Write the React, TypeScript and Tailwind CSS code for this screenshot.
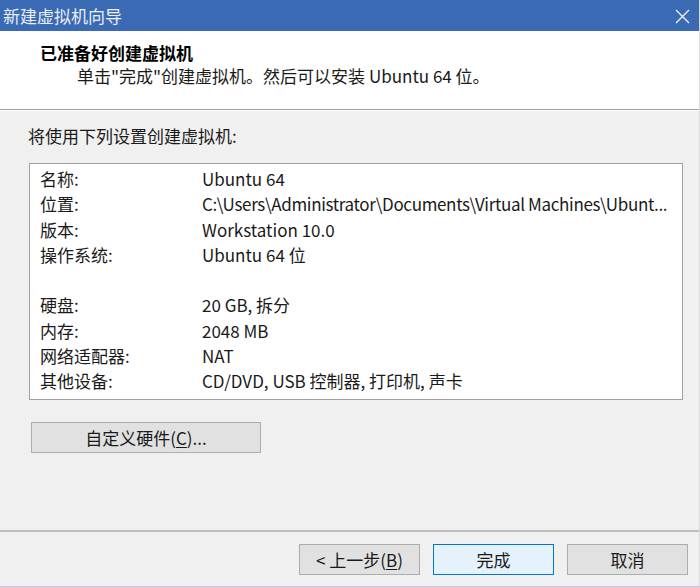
import type { ReactNode } from "react";

const FONT = { fontFamily: '"Noto Sans CJK SC", "Noto Sans", sans-serif' };

type Row = { label: string; value: string; tight?: boolean } | null;

const rows: Row[] = [
  { label: "名称:", value: "Ubuntu 64" },
  { label: "位置:", value: "C:\\Users\\Administrator\\Documents\\Virtual Machines\\Ubunt...", tight: true },
  { label: "版本:", value: "Workstation 10.0" },
  { label: "操作系统:", value: "Ubuntu 64 位" },
  null,
  { label: "硬盘:", value: "20 GB, 拆分" },
  { label: "内存:", value: "2048 MB" },
  { label: "网络适配器:", value: "NAT" },
  { label: "其他设备:", value: "CD/DVD, USB 控制器, 打印机, 声卡" },
];

function DlgButton({ children, primary }: { children: ReactNode; primary?: boolean }) {
  return (
    <button
      className={`w-[121px] h-[31px] flex items-center justify-center text-[17px] text-[#1a1a1a] border ${
        primary ? "bg-[#e5f1fb] border-[#0078d7]" : "bg-[#e1e1e1] border-[#adadad]"
      }`}
    >
      {children}
    </button>
  );
}

export default function App() {
  return (
    <div
      className="w-[700px] h-[587px] flex flex-col bg-[#f0f0f0] border-r border-r-[#dadada] border-b border-b-[#b9cbe0] overflow-hidden"
      style={FONT}
    >
      {/* title bar */}
      <div className="h-[31px] shrink-0 bg-[#3a6ab4] flex items-center justify-between pl-[3px] pr-[9px]">
        <span className="text-[17px] text-[#e9eef7] leading-none">新建虚拟机向导</span>
        <svg width="15" height="15" viewBox="0 0 15 15" className="mt-[1px]">
          <path d="M1 1 L14 14 M14 1 L1 14" stroke="#eef2fa" strokeWidth="1.4" fill="none" />
        </svg>
      </div>

      {/* header */}
      <div className="h-[78px] shrink-0 bg-white pl-[40px] pt-[10px] leading-[23px]">
        <div className="text-[17px] font-bold text-black">已准备好创建虚拟机</div>
        <div className="text-[17px] text-[#1a1a1a] pl-[37px]">单击"完成"创建虚拟机。然后可以安装 Ubuntu 64 位。</div>
      </div>
      <div className="h-px shrink-0 bg-[#a0a0a0]" />
      <div className="h-px shrink-0 bg-white" />

      {/* body */}
      <div className="flex-1 flex flex-col pt-[13px]">
        <div className="pl-[28px] text-[17px] leading-[23px] text-[#1a1a1a]">将使用下列设置创建虚拟机:</div>

        <div className="ml-[29px] mt-[16px] w-[654px] h-[237px] bg-white border border-[#a0a0a0] pt-[2px] pl-[10px] pr-[4px]">
          {rows.map((r, i) =>
            r ? (
              <div key={i} className="flex h-[25.3px] items-center text-[17px] text-[#1a1a1a]">
                <span className="w-[162px] shrink-0">{r.label}</span>
                <span className={`whitespace-nowrap ${r.tight ? "tracking-[-0.35px]" : ""}`}>{r.value}</span>
              </div>
            ) : (
              <div key={i} className="h-[25.3px]" />
            )
          )}
        </div>

        <button className="ml-[31px] mt-[22px] w-[230px] h-[31px] flex items-center justify-center bg-[#e1e1e1] border border-[#adadad] text-[17px] text-[#1a1a1a]">
          自定义硬件(<span className="underline underline-offset-2">C</span>)...
        </button>
      </div>

      {/* footer */}
      <div className="h-[2px] shrink-0 bg-[#bdbdbd]" />
      <div className="h-[54px] shrink-0 flex justify-end gap-[13px] pt-[12px] pr-[11px]">
        <DlgButton>
          &lt; 上一步(<span className="underline underline-offset-2">B</span>)
        </DlgButton>
        <DlgButton primary>完成</DlgButton>
        <DlgButton>取消</DlgButton>
      </div>
    </div>
  );
}
